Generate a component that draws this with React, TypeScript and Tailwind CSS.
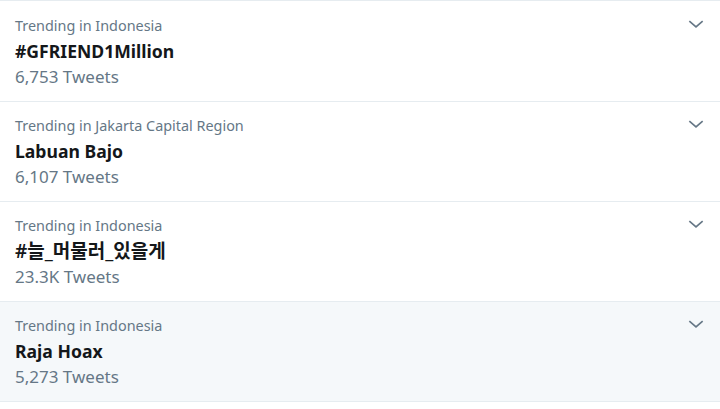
import React from 'react';

interface Trend {
  location: string;
  name: string;
  tweets: string;
  highlighted?: boolean;
  cjk?: boolean;
}

const trends: Trend[] = [
  { location: 'Trending in Indonesia', name: '#GFRIEND1Million', tweets: '6,753 Tweets' },
  { location: 'Trending in Jakarta Capital Region', name: 'Labuan Bajo', tweets: '6,107 Tweets' },
  { location: 'Trending in Indonesia', name: '#늘_머물러_있을게', tweets: '23.3K Tweets', cjk: true },
  { location: 'Trending in Indonesia', name: 'Raja Hoax', tweets: '5,273 Tweets', highlighted: true },
];

function Chevron() {
  return (
    <svg viewBox="0 0 24 24" className="w-[20px] h-[20px] text-[#657786]" fill="none" stroke="currentColor" strokeWidth="2">
      <path d="M4 8.5l8 7 8-7" />
    </svg>
  );
}

function TrendRow({ location, name, tweets, highlighted, cjk }: Trend) {
  return (
    <div
      className={`flex justify-between border-b border-[#e6ecf0] h-[100px] pl-[15px] pr-[14px] pt-[12px] ${
        highlighted ? 'bg-[#f5f8fa]' : 'bg-white'
      }`}
    >
      <div className="flex flex-col">
        <span className="text-[14.4px] leading-[24px] text-[#657786]">{location}</span>
        <span
          className={`leading-[26px] text-[#14171a] ${
            cjk ? 'text-[19px] font-semibold' : 'text-[17.6px] font-bold'
          }`}
        >
          {name}
        </span>
        <span className="text-[17px] leading-[26px] text-[#657786]">{tweets}</span>
      </div>
      <div>
        <Chevron />
      </div>
    </div>
  );
}

export default function App() {
  return (
    <div
      className="w-[720px] h-[409px] bg-white border-t border-[#e6ecf0] pt-[1px]"
      style={{ fontFamily: '"Noto Sans", "Noto Sans CJK KR", sans-serif' }}
    >
      {trends.map((t, i) => (
        <TrendRow key={i} {...t} />
      ))}
    </div>
  );
}
